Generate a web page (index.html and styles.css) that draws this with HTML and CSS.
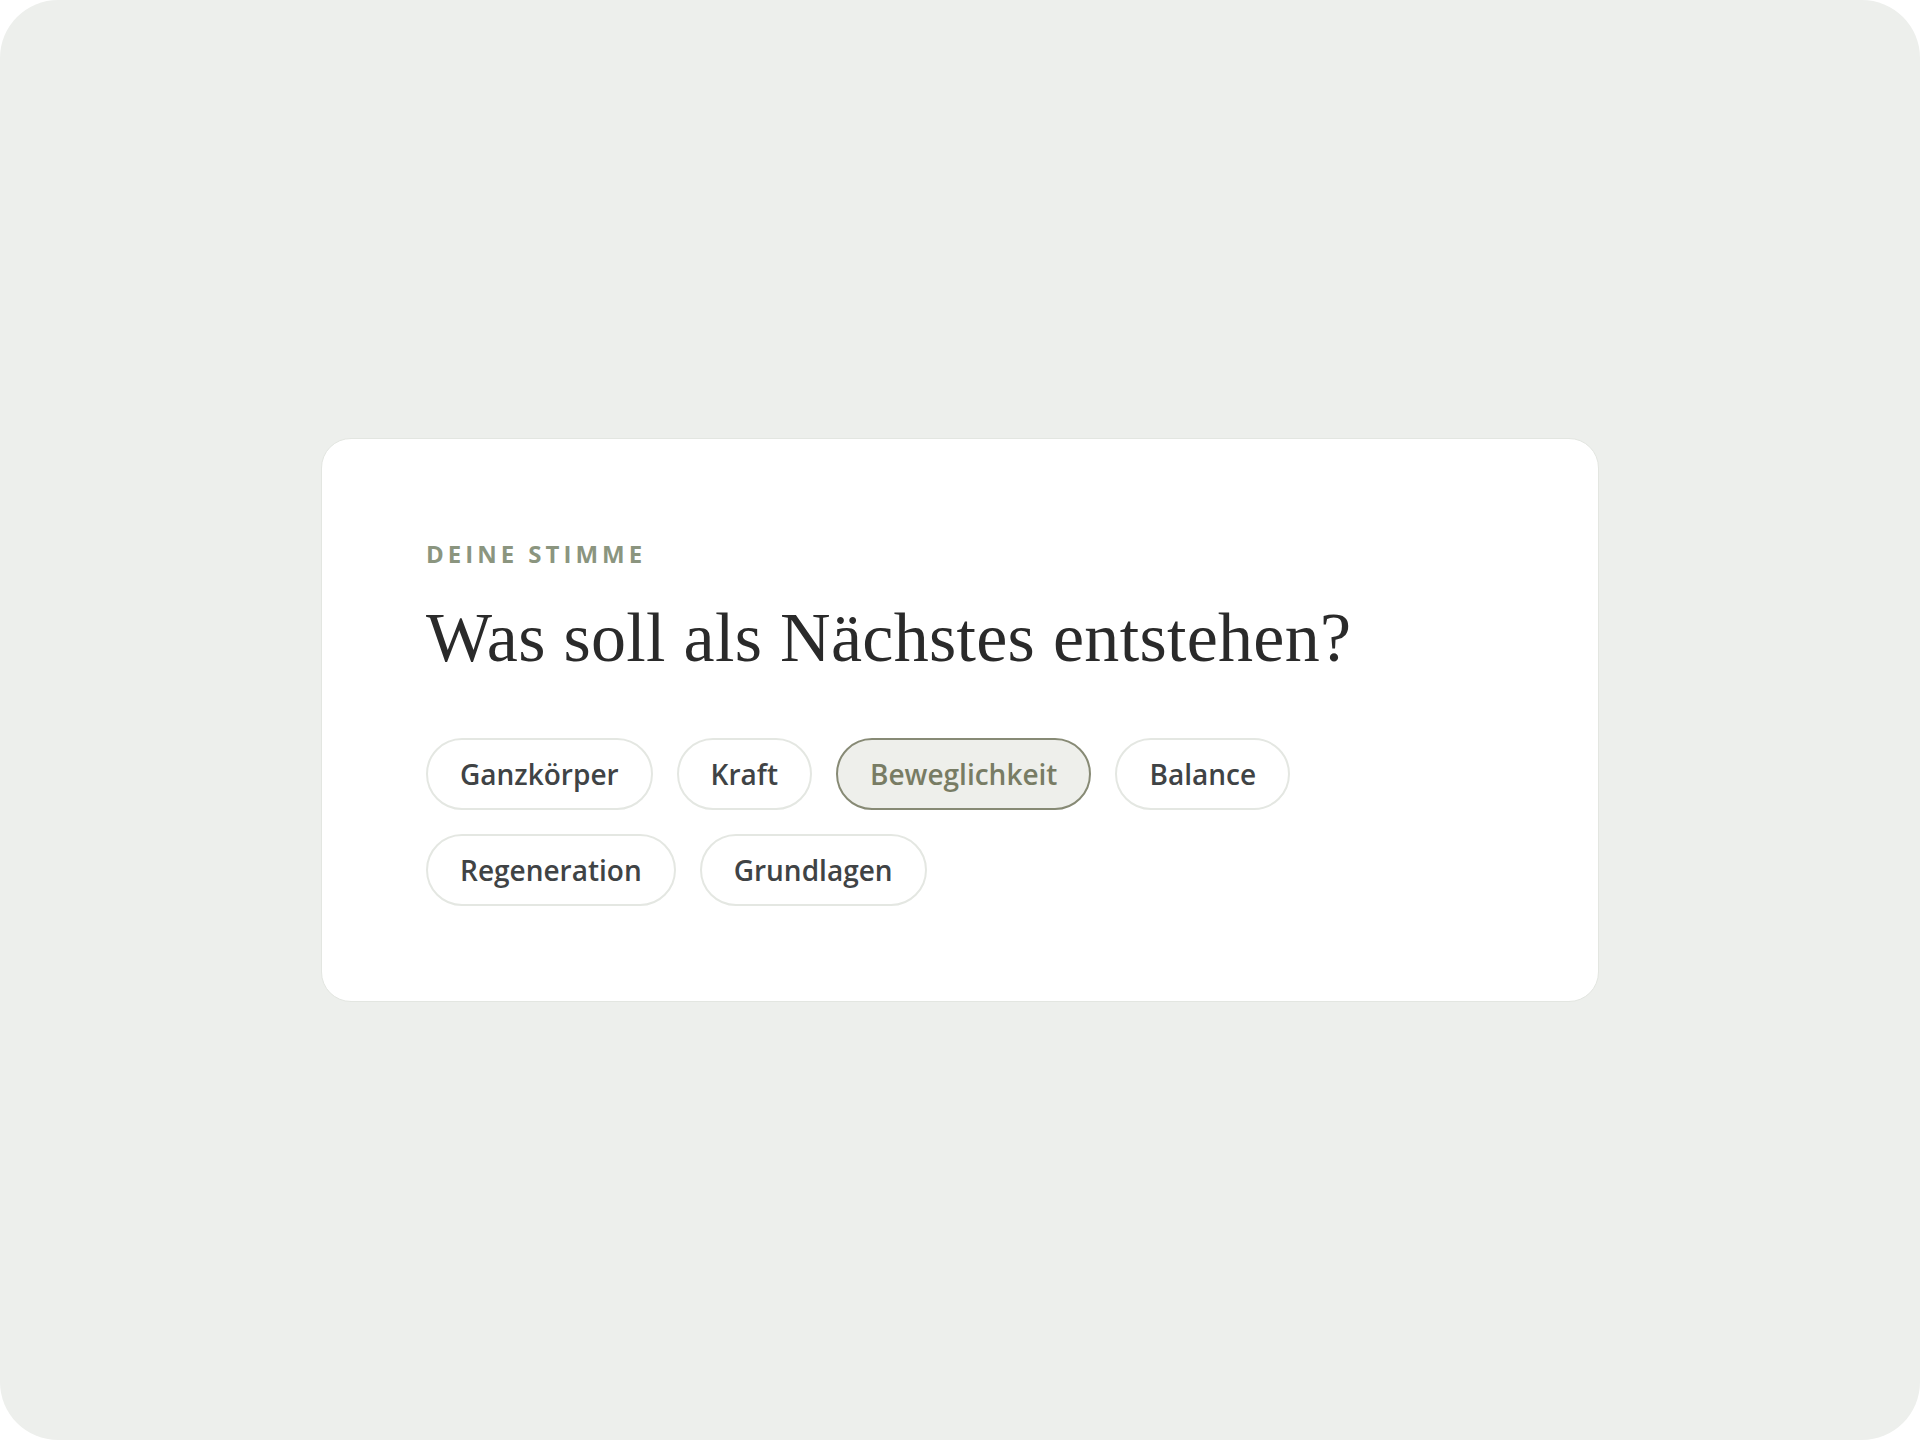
FILE: index.html
```html
<!DOCTYPE html>
<html lang="de">
<head>
<meta charset="utf-8">
<title>Deine Stimme</title>
<link rel="stylesheet" href="styles.css">
</head>
<body>
<main class="screen">
  <section class="card">
    <p class="eyebrow">Deine Stimme</p>
    <h1 class="question">Was soll als Nächstes entstehen?</h1>
    <div class="choices">
      <button class="chip" type="button">Ganzkörper</button>
      <button class="chip" type="button">Kraft</button>
      <button class="chip chip--active" type="button">Beweglichkeit</button>
      <button class="chip" type="button">Balance</button>
      <button class="chip" type="button">Regeneration</button>
      <button class="chip" type="button">Grundlagen</button>
    </div>
  </section>
</main>
</body>
</html>
```

FILE: styles.css
```css
* {
  box-sizing: border-box;
}

html,
body {
  margin: 0;
  background: #ffffff;
}

.screen {
  height: 1440px;
  border-radius: 58px;
  background: #edefec;
  display: flex;
  align-items: center;
  justify-content: center;
}

.card {
  width: 1278px;
  height: 564px;
  background: #ffffff;
  border: 1px solid #e3e6e1;
  border-radius: 30px;
  padding: 99px 104px 95px;
}

.eyebrow {
  margin: 0;
  font-family: "Open Sans", "Noto Sans", sans-serif;
  font-weight: 700;
  font-size: 24px;
  line-height: 32px;
  letter-spacing: 4px;
  text-transform: uppercase;
  color: #8b957f;
}

.question {
  margin: 24px 0 0;
  font-family: "Liberation Serif", serif;
  font-weight: 400;
  font-size: 70px;
  line-height: 88px;
  letter-spacing: 0.3px;
  color: #2a2a2a;
}

.choices {
  margin-top: 56px;
  display: flex;
  flex-wrap: wrap;
  gap: 24px;
}

.chip {
  height: 72px;
  padding: 0 32px;
  border: 2px solid #e4e7e2;
  border-radius: 999px;
  background: #ffffff;
  font-family: "Open Sans", "Noto Sans", sans-serif;
  font-weight: 600;
  font-size: 28px;
  line-height: 34px;
  color: #404345;
  cursor: pointer;
}

.chip--active {
  background: #eeefeb;
  border-color: #878a75;
  color: #787c64;
}
```
